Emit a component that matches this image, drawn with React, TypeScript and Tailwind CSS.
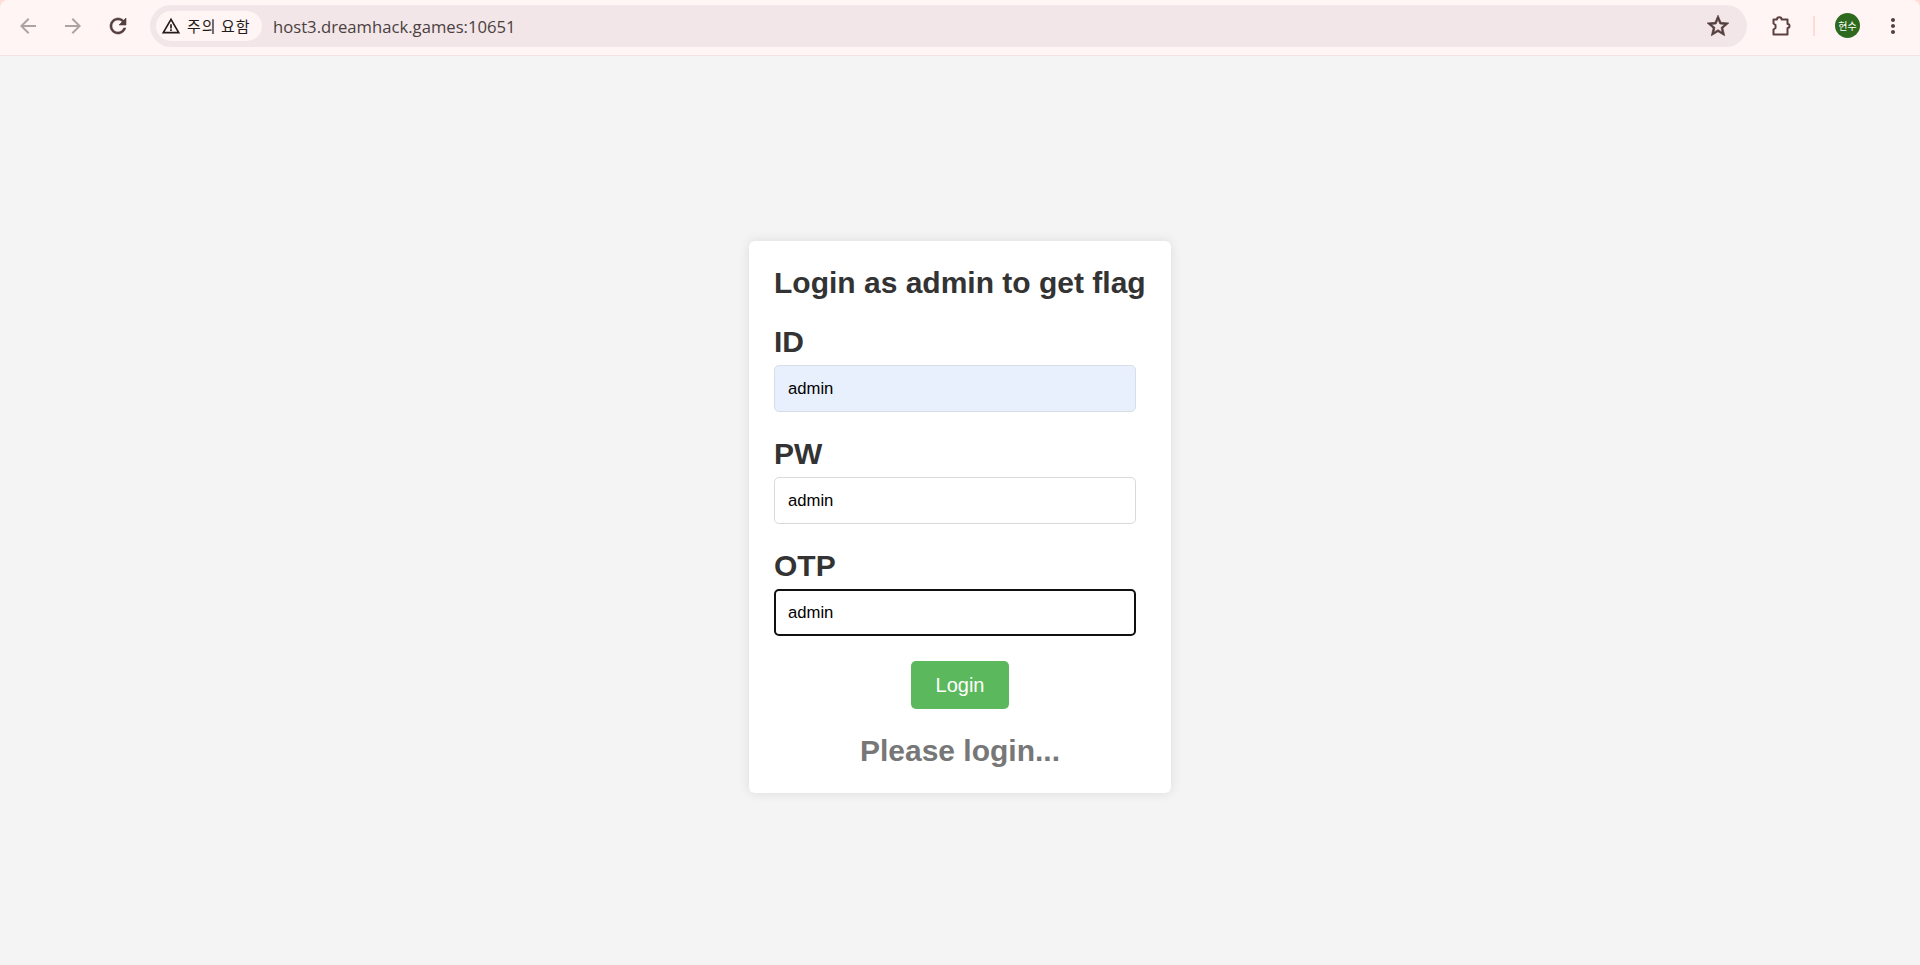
import { MdArrowBack, MdArrowForward, MdMoreVert, MdWarningAmber } from "react-icons/md";

const cardFont = "font-['Liberation_Sans',Arial,sans-serif]";

function Field({ label, input, cls }: { label: string; input: string; cls: string }) {
  return (
    <div className="mb-[24px]">
      <div className="text-[30px] font-bold leading-[35px] text-[#333] mb-[6px]">{label}</div>
      <div className={`w-[362px] h-[47px] rounded-[5px] flex items-center pb-[1px] text-[16.67px] text-black ${cls}`}>{input}</div>
    </div>
  );
}

function ReloadIcon() {
  return (
    <svg width="24" height="24" viewBox="0 0 24 24" fill="#543e3e" stroke="#543e3e" strokeWidth="0.6">
      <path d="M17.65 6.35C16.2 4.9 14.21 4 12 4c-4.42 0-7.99 3.58-7.99 8s3.57 8 7.99 8c3.73 0 6.84-2.55 7.73-6h-2.08c-.82 2.33-3.04 4-5.65 4-3.31 0-6-2.69-6-6s2.69-6 6-6c1.66 0 3.14.69 4.22 1.78L13 11h7V4l-2.35 2.35z" />
    </svg>
  );
}

function StarIcon() {
  return (
    <svg width="26" height="26" viewBox="0 0 24 24" fill="#543e3e" stroke="#543e3e" strokeWidth="0.6" className="ml-auto">
      <path d="M22 9.24l-7.19-.62L12 2 9.19 8.63 2 9.24l5.46 4.73L5.82 21 12 17.27 18.18 21l-1.63-7.03L22 9.24zM12 15.4l-3.76 2.27 1-4.28-3.32-2.88 4.38-.38L12 6.1l1.71 4.04 4.38.38-3.32 2.88 1 4.28L12 15.4z" />
    </svg>
  );
}

export default function App() {
  return (
    <div className="w-[1920px] h-[965px] overflow-hidden bg-[#f4f4f4] flex flex-col">
      <div className="h-[56px] shrink-0 bg-[#ffdcd8]">
        <div className="h-[56px] bg-[#fff5f4] border-b border-[#f5e1df] flex items-start rounded-t-[8px]">
          <div className="flex items-center gap-[21px] pl-[16px] h-[52px]">
            <MdArrowBack size={24} className="text-[#aca4a3]" />
            <MdArrowForward size={24} className="text-[#aca4a3]" />
            <ReloadIcon />
          </div>
          <div className="ml-[20px] mt-[5px] w-[1597px] h-[42px] rounded-full bg-[#f2e6e8] flex items-center pl-[6px] pr-[16px]">
            <div className="h-[30px] w-[106px] rounded-full bg-[#fff5f4] flex items-center pl-[5px] gap-[6px] text-[15px] tracking-[1px] text-[#241b1b] font-['Noto_Sans_CJK_KR',sans-serif]">
              <MdWarningAmber size={20} className="text-[#241b1b] shrink-0" />
              <span className="whitespace-nowrap">주의 요함</span>
            </div>
            <span className="ml-[11px] text-[16.67px] text-[#4b3f3f] font-['Open_Sans',sans-serif]">host3.dreamhack.games:10651</span>
            <StarIcon />
          </div>
          <svg width="24" height="24" viewBox="0 0 24 24" fill="none" stroke="#5c4040" strokeWidth="2" strokeLinejoin="round" className="ml-[21px] mt-[14px]">
            <path d="M5.5 5.5 H9 a2.3 2.3 0 0 1 4.6 0 H19.5 V10 a2 2 0 0 1 0 4 V20.5 H5.5 V15.5 L7.5 14 V11 L5.5 9.5 Z" />
          </svg>
          <div className="ml-[21px] mt-[16px] w-[2px] h-[20px] bg-[#fcdcd9]" />
          <div className="ml-[20px] mt-[13px] w-[25px] h-[25px] rounded-full bg-[#2e6a1e] text-white text-[10px] flex items-center justify-center font-['Noto_Sans_CJK_KR',sans-serif]">현수</div>
          <MdMoreVert size={24} className="ml-[21px] mt-[14px] text-[#543e3e]" />
        </div>
      </div>
      <div className={`flex-1 flex justify-center pt-[185px] ${cardFont}`}>
        <div className="w-[422px] h-[552px] bg-white rounded-[6px] shadow-[0_0_12px_rgba(0,0,0,0.1)] px-[25px] pt-[24px] flex flex-col">
          <div className="text-[30px] font-bold leading-[35px] text-[#333] whitespace-nowrap mb-[24px]">Login as admin to get flag</div>
          <Field label="ID" input="admin" cls="px-[13px] bg-[#e8f0fe] border border-[#d9dde6]" />
          <Field label="PW" input="admin" cls="px-[13px] bg-white border border-[#d9d9d9]" />
          <Field label="OTP" input="admin" cls="px-[12px] bg-white border-2 border-[#101010]" />
          <button className="mx-auto mt-[1px] w-[98px] h-[48px] shrink-0 rounded-[5px] bg-[#5cb85c] text-white text-[20px]">Login</button>
          <div className="mt-[24px] text-center text-[30px] font-bold leading-[35px] text-[#777]">Please login...</div>
        </div>
      </div>
    </div>
  );
}
